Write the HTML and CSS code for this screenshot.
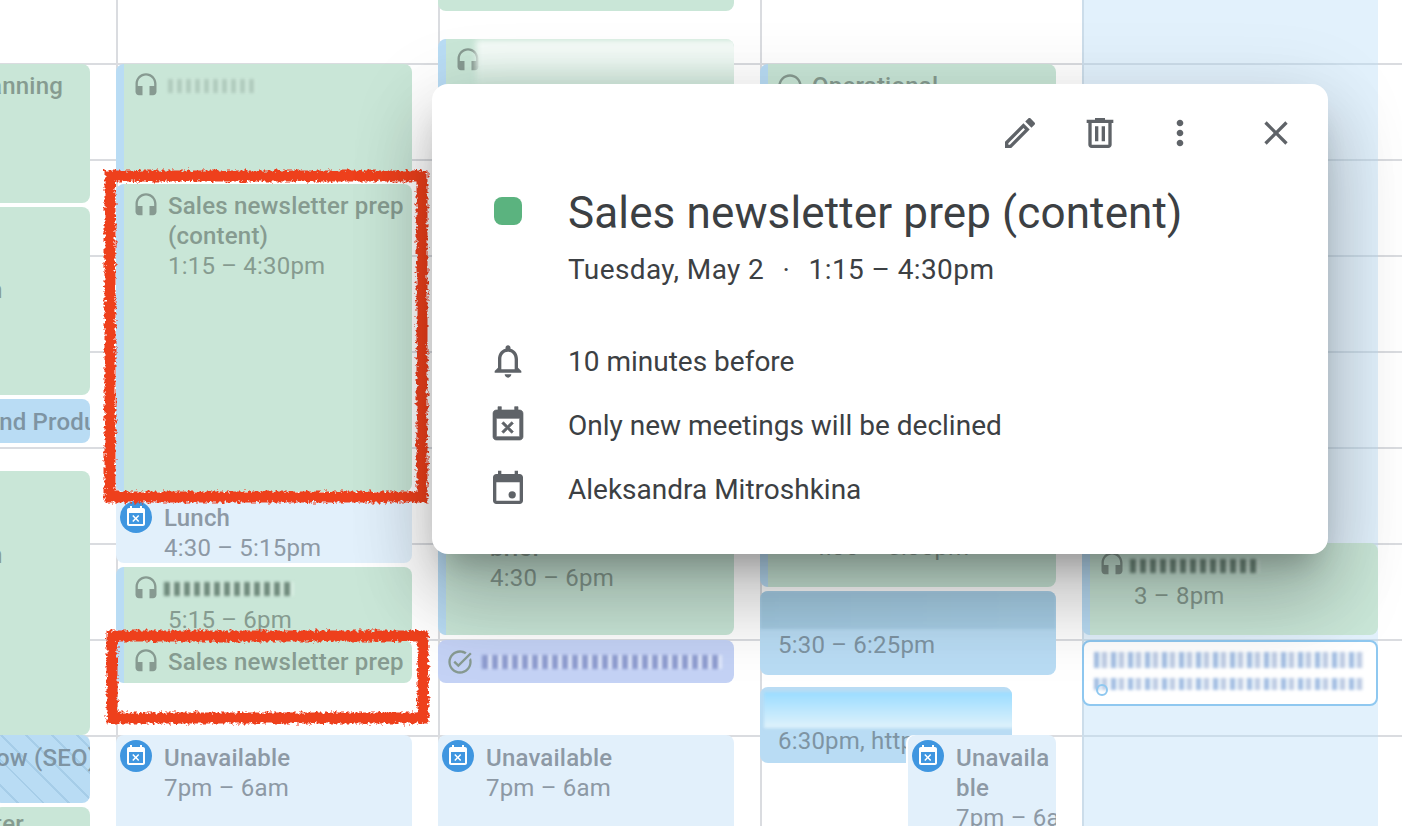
FILE: index.html
```html
<!DOCTYPE html>
<html lang="en">
<head>
    <meta charset="UTF-8">
    <title>Calendar event details</title>
    <link rel="stylesheet" href="styles.css">
</head>
<body>
    <svg class="icon-defs" aria-hidden="true">
        <defs>
            <symbol id="i-headset" viewBox="0 0 24 24"><path d="M12 1c-4.97 0-9 4.03-9 9v7c0 1.66 1.34 3 3 3h3v-8H5v-2c0-3.87 3.13-7 7-7s7 3.13 7 7v2h-4v8h3c1.66 0 3-1.34 3-3v-7c0-4.97-4.03-9-9-9z"/></symbol>
            <symbol id="i-busy" viewBox="0 0 24 24"><path d="M9.31 17l2.44-2.44L14.19 17l1.06-1.06-2.44-2.44 2.44-2.44L14.19 10l-2.44 2.44L9.31 10l-1.06 1.06 2.44 2.44-2.44 2.44L9.31 17zM19 3h-1V1h-2v2H8V1H6v2H5c-1.11 0-1.99.9-1.99 2L3 19c0 1.1.89 2 2 2h14c1.1 0 2-.9 2-2V5c0-1.1-.9-2-2-2zm0 16H5V8h14v11z"/></symbol>
            <symbol id="i-task" viewBox="0 0 24 24"><path d="M22 5.18L10.59 16.6l-4.24-4.25 1.41-1.41 2.83 2.83 10-10L22 5.18zM19.79 10.22c.13.57.21 1.17.21 1.78 0 4.42-3.58 8-8 8s-8-3.58-8-8 3.58-8 8-8c1.58 0 3.04.46 4.28 1.25l1.44-1.44C16.1 2.67 14.13 2 12 2 6.48 2 2 6.48 2 12s4.48 10 10 10 10-4.48 10-10c0-1.19-.22-2.33-.6-3.39l-1.61 1.61z"/></symbol>
            <symbol id="i-ring" viewBox="0 0 24 24"><path d="M12 2C6.48 2 2 6.48 2 12s4.48 10 10 10 10-4.48 10-10S17.52 2 12 2zm0 18c-4.42 0-8-3.58-8-8s3.58-8 8-8 8 3.58 8 8-3.58 8-8 8z"/></symbol>
        </defs>
    </svg>

    <div class="calendar">
        <div class="day day-first">
            <div class="event green cut cut-planning"><div class="title">Planning</div></div>
            <div class="event green cut cut-n1"><div class="title">n</div></div>
            <div class="event blue cut cut-product"><div class="title">and Product</div></div>
            <div class="event green cut cut-n2"><div class="title">n</div></div>
            <div class="event hatched cut cut-seo"><div class="title">ow (SEO)</div></div>
            <div class="event green cut cut-last"><div class="title">ter</div></div>
        </div>

        <div class="day">
            <div class="event green stripe ev-review">
                <svg class="ev-icon"><use href="#i-headset"/></svg>
                <div class="ev-body"><span class="smudge sm-short"></span></div>
            </div>
            <div class="event green stripe ev-prep">
                <svg class="ev-icon"><use href="#i-headset"/></svg>
                <div class="ev-body">
                    <div class="title">Sales newsletter prep (content)</div>
                    <div class="time">1:15 – 4:30pm</div>
                </div>
            </div>
            <div class="event pale ev-lunch">
                <span class="busy"><svg><use href="#i-busy"/></svg></span>
                <div class="ev-body">
                    <div class="title">Lunch</div>
                    <div class="time">4:30 – 5:15pm</div>
                </div>
            </div>
            <div class="event green stripe ev-after">
                <svg class="ev-icon"><use href="#i-headset"/></svg>
                <div class="ev-body">
                    <span class="smudge sm-dark"></span>
                    <div class="time">5:15 – 6pm</div>
                </div>
            </div>
            <div class="event green stripe ev-prep2">
                <svg class="ev-icon"><use href="#i-headset"/></svg>
                <div class="ev-body"><div class="title">Sales newsletter prep</div></div>
            </div>
            <div class="event pale ev-unavail">
                <span class="busy"><svg><use href="#i-busy"/></svg></span>
                <div class="ev-body">
                    <div class="title">Unavailable</div>
                    <div class="time">7pm – 6am</div>
                </div>
            </div>
        </div>

        <div class="day">
            <div class="event green ev-top"></div>
            <div class="event green stripe ev-morning">
                <svg class="ev-icon"><use href="#i-headset"/></svg>
                <div class="ev-body"><span class="smudge sm-wash"></span></div>
            </div>
            <div class="event green stripe ev-brief">
                <svg class="ev-icon"><use href="#i-headset"/></svg>
                <div class="ev-body">
                    <div class="title title-second">brief</div>
                    <div class="time">4:30 – 6pm</div>
                </div>
            </div>
            <div class="event task ev-task">
                <svg class="ev-icon"><use href="#i-task"/></svg>
                <div class="ev-body"><span class="smudge sm-task"></span></div>
            </div>
            <div class="event pale ev-unavail">
                <span class="busy"><svg><use href="#i-busy"/></svg></span>
                <div class="ev-body">
                    <div class="title">Unavailable</div>
                    <div class="time">7pm – 6am</div>
                </div>
            </div>
        </div>

        <div class="day">
            <div class="event green stripe ev-ops">
                <svg class="ev-icon"><use href="#i-ring"/></svg>
                <div class="ev-body"><div class="title">Operational</div></div>
            </div>
            <div class="event green stripe ev-ops2">
                <div class="ev-body">
                    <div class="time">4:30 – 5:30pm</div>
                </div>
            </div>
            <div class="event blue ev-call">
                <div class="ev-plain">
                    <span class="smudge sm-blue"></span>
                    <div class="time">5:30 – 6:25pm</div>
                </div>
            </div>
            <div class="event blue ev-link">
                <div class="ev-plain">
                    <span class="smudge sm-bright"></span>
                    <div class="time nowrap">6:30pm, http</div>
                </div>
            </div>
            <div class="event pale ev-narrow">
                <span class="busy"><svg><use href="#i-busy"/></svg></span>
                <div class="ev-body">
                    <div class="title">Unavailable</div>
                    <div class="time nowrap">7pm – 6am</div>
                </div>
            </div>
        </div>

        <div class="day">
            <div class="allday"></div>
            <div class="event green stripe ev-late">
                <svg class="ev-icon"><use href="#i-headset"/></svg>
                <div class="ev-body">
                    <span class="smudge sm-dark"></span>
                    <div class="time">3 – 8pm</div>
                </div>
            </div>
            <div class="event outlined ev-outlined">
                <span class="smudge sm-noise"></span>
                <span class="smudge sm-noise sm-noise-low"></span>
                <span class="ring"></span>
            </div>
        </div>

        <svg class="scribbles" width="1402" height="826" aria-hidden="true">
            <filter id="rough" x="-5%" y="-5%" width="110%" height="110%">
                <feTurbulence type="fractalNoise" baseFrequency="0.32" numOctaves="3" seed="4"/>
                <feDisplacementMap in="SourceGraphic" scale="7"/>
            </filter>
            <g filter="url(#rough)" fill="none" stroke="#ee3f1e" stroke-width="11">
                <rect x="110" y="176" width="312" height="321"/>
                <rect x="112" y="636" width="311" height="82"/>
            </g>
        </svg>

        <div class="popup">
            <div class="toolbar">
                <svg class="tool" viewBox="0 0 24 24"><path d="M14.06 9.02l.92.92L5.92 19H5v-.92l9.06-9.06M17.66 3c-.25 0-.51.1-.7.29l-1.83 1.83 3.75 3.75 1.83-1.83c.39-.39.39-1.02 0-1.41l-2.34-2.34c-.2-.2-.45-.29-.71-.29zm-3.6 3.19L3 17.25V21h3.75L17.81 9.94l-3.75-3.75z"/></svg>
                <svg class="tool" viewBox="0 0 24 24"><path d="M15 4V3H9v1H4v2h1v13c0 1.1.9 2 2 2h10c1.1 0 2-.9 2-2V6h1V4h-5zm2 15H7V6h10v13zM9 8h2v9H9zm4 0h2v9h-2z"/></svg>
                <svg class="tool" viewBox="0 0 24 24"><path d="M12 8c1.1 0 2-.9 2-2s-.9-2-2-2-2 .9-2 2 .9 2 2 2zm0 2c-1.1 0-2 .9-2 2s.9 2 2 2 2-.9 2-2-.9-2-2-2zm0 6c-1.1 0-2 .9-2 2s.9 2 2 2 2-.9 2-2-.9-2-2-2z"/></svg>
                <svg class="tool tool-close" viewBox="0 0 24 24"><path d="M19 6.41L17.59 5 12 10.59 6.41 5 5 6.41 10.59 12 5 17.59 6.41 19 12 13.41 17.59 19 19 17.59 13.41 12z"/></svg>
            </div>

            <div class="popup-head">
                <span class="swatch"></span>
                <div>
                    <h2 class="popup-title">Sales newsletter prep (content)</h2>
                    <p class="popup-date">Tuesday, May 2 <span class="dot">·</span> 1:15 – 4:30pm</p>
                </div>
            </div>

            <div class="popup-rows">
                <div class="row">
                    <svg class="row-icon" viewBox="0 0 24 24"><path d="M12 22c1.1 0 2-.9 2-2h-4c0 1.1.9 2 2 2zm6-6v-5c0-3.07-1.63-5.64-4.5-6.32V4c0-.83-.67-1.5-1.5-1.5s-1.5.67-1.5 1.5v.68C7.64 5.36 6 7.92 6 11v5l-2 2v1h16v-1l-2-2zm-2 1H8v-6c0-2.48 1.51-4.5 4-4.5s4 2.02 4 4.5v6z"/></svg>
                    <span>10 minutes before</span>
                </div>
                <div class="row">
                    <svg class="row-icon row-icon-bold"><use href="#i-busy"/></svg>
                    <span>Only new meetings will be declined</span>
                </div>
                <div class="row">
                    <svg class="row-icon" viewBox="0 0 24 24"><path d="M16 1v2H8V1H6v2H5c-1.11 0-1.99.9-1.99 2L3 19c0 1.1.89 2 2 2h14c1.1 0 2-.9 2-2V5c0-1.1-.9-2-2-2h-1V1h-2zm3 18H5V8h14v11z"/><circle cx="14.5" cy="15.5" r="2.2"/></svg>
                    <span>Aleksandra Mitroshkina</span>
                </div>
            </div>
        </div>
    </div>
</body>
</html>
```

FILE: styles.css
```css
/* Page and week grid */
body {
    margin: 0;
    background-color: #fff;
    font-family: Roboto, "Liberation Sans", sans-serif;
}
.icon-defs {
    display: none;
}
.calendar {
    position: relative;
    display: flex;
    width: 1402px;
    height: 826px;
    overflow: hidden;
    background-image: repeating-linear-gradient(180deg, transparent 0 63px, #dadce0 63px 65px, transparent 65px 96px);
}
.day {
    position: relative;
    flex: 0 0 322px;
    border-left: 2px solid #dadce0;
    box-sizing: border-box;
}
.day-first {
    flex-basis: 116px;
    border-left: none;
}
.allday {
    position: absolute;
    top: 0;
    bottom: 0;
    left: -2px;
    width: 296px;
    background-color: rgba(186, 222, 247, 0.42);
}

/* Events, placed by their start time */
.event {
    position: absolute;
    left: -2px;
    display: flex;
    width: 296px;
    box-sizing: border-box;
    overflow: hidden;
    border-radius: 8px;
    font-size: 24px;
    line-height: 30px;
    letter-spacing: 0.2px;
}
.green {
    background-color: #c9e6d7;
    color: #869b90;
}
.blue {
    background-color: #b9dcf4;
    color: #7e94a3;
}
.pale {
    background-color: #e2f0fb;
    color: #8d99a5;
}
.task {
    background-color: #c4d2f5;
    color: #7f8794;
}
.hatched {
    background-color: #b9dcf4;
    background-image: repeating-linear-gradient(45deg, transparent 0 16px, #a6cde8 16px 18px);
    color: #7e94a3;
}
.outlined {
    display: block;
    border: 2px solid #8fc8f0;
    background-color: #fff;
}
.stripe {
    border-left: 8px solid #b9dcf4;
}
.title {
    font-weight: 500;
}
.title-second {
    margin-top: 30px;
}
.time {
    font-weight: 400;
}
.nowrap {
    white-space: nowrap;
}
.ev-icon {
    flex: none;
    width: 28px;
    height: 28px;
    margin: 8px 8px 0;
    fill: #879a91;
}
.ev-body {
    flex: 1;
    min-width: 0;
    padding: 7px 6px 0 0;
}
.ev-plain {
    padding: 9px 18px 0;
    width: 100%;
    box-sizing: border-box;
}
.busy {
    display: flex;
    flex: none;
    align-items: center;
    justify-content: center;
    width: 32px;
    height: 32px;
    margin: 5px 12px 0 4px;
    border-radius: 50%;
    background-color: #3f96e0;
}
.busy svg {
    width: 24px;
    height: 24px;
    fill: #fff;
}

/* First column, only the right ends of the events are in view */
.cut {
    left: auto;
    right: 26px;
    white-space: nowrap;
}
.cut-planning {
    top: 64px;
    width: 100px;
    height: 139px;
    padding: 7px 27px 0 0;
    justify-content: flex-end;
}
.cut-n1 {
    top: 207px;
    width: 110px;
    height: 188px;
    padding: 68px 0 0 9px;
}
.cut-product {
    top: 399px;
    width: 104px;
    height: 44px;
    padding: 8px 0 0 0;
}
.cut-n2 {
    top: 471px;
    width: 110px;
    height: 264px;
    padding: 69px 0 0 9px;
}
.cut-seo {
    top: 735px;
    width: 96px;
    height: 68px;
    padding: 8px 0 0 2px;
    border: none;
}
.cut-last {
    top: 807px;
    width: 96px;
    height: 40px;
    padding: 2px 0 0 0;
}

/* Second column */
.ev-review {
    top: 64px;
    height: 116px;
}
.ev-prep {
    top: 184px;
    height: 308px;
}
.ev-lunch {
    top: 496px;
    height: 67px;
}
.ev-unavail .ev-body,
.ev-narrow .ev-body {
    padding-top: 8px;
}
.ev-after {
    top: 567px;
    height: 69px;
}
.ev-after .smudge {
    margin-bottom: 9px;
}
.ev-prep2 {
    top: 640px;
    height: 43px;
}
.ev-unavail {
    top: 735px;
    height: 120px;
}

/* Third column */
.ev-top {
    top: -40px;
    height: 51px;
}
.ev-morning {
    top: 39px;
    height: 100px;
}
.ev-brief {
    top: 496px;
    height: 139px;
}
.ev-task {
    top: 640px;
    height: 43px;
}

/* Fourth column */
.ev-ops {
    top: 64px;
    height: 100px;
}
.ev-ops2 {
    top: 496px;
    height: 91px;
    padding-left: 44px;
}
.ev-ops2 .ev-body {
    padding-top: 36px;
}
.ev-call {
    top: 591px;
    height: 84px;
}
.ev-link {
    top: 687px;
    width: 252px;
    height: 76px;
}
.ev-narrow {
    top: 735px;
    left: 146px;
    width: 148px;
    height: 120px;
    box-shadow: -2px 0 0 #fff;
}
.ev-narrow .title {
    word-break: break-all;
}
.ev-narrow .ev-body {
    padding-right: 0;
}

/* Fifth column */
.ev-late {
    top: 543px;
    height: 92px;
}
.ev-late .ev-body {
    padding-top: 8px;
}
.ev-outlined {
    top: 640px;
    height: 66px;
    padding: 8px 10px;
}
.ring {
    position: absolute;
    top: 42px;
    left: 12px;
    width: 12px;
    height: 12px;
    box-sizing: border-box;
    border: 2px solid #8fc8f0;
    border-radius: 50%;
}

/* Smudged titles, these are not readable in the reference */
.smudge {
    display: block;
    height: 14px;
    margin: 8px 0;
    filter: blur(1.5px);
    background-image: repeating-linear-gradient(90deg, #8ca396 0 5px, #d8eee2 5px 9px);
}
.sm-short {
    width: 88px;
    opacity: 0.4;
}
.sm-dark {
    width: 130px;
    margin-left: -4px;
    background-image: repeating-linear-gradient(90deg, #6f8a7c 0 6px, #d8eee2 6px 10px);
}
.sm-wash {
    width: 270px;
    height: 46px;
    margin: -6px 0 0 -14px;
    filter: blur(3px);
    background-image: linear-gradient(180deg, #f7fcf9 0, #eef8f3 40%, #cfe7da 100%);
}
.sm-task {
    width: 240px;
    background-image: repeating-linear-gradient(90deg, #8d9bcf 0 6px, #e2eafc 6px 10px);
}
.sm-blue {
    width: 296px;
    height: 38px;
    margin: -9px 0 1px -18px;
    background-image: linear-gradient(90deg, #a4cce3, #a8d0e8);
}
.sm-bright {
    width: 250px;
    height: 36px;
    margin: -4px 0 -2px -14px;
    background-image: linear-gradient(180deg, #9adcff, #dff2fb);
}
.sm-noise {
    width: 270px;
    height: 16px;
    margin: 2px 0 0;
    opacity: 0.7;
    background-image: repeating-linear-gradient(90deg, #7ea3d6 0 5px, #e6f2fb 5px 8px, #a3b6d8 8px 13px, #f3f8fc 13px 17px);
}
.sm-noise-low {
    margin-top: 10px;
    height: 12px;
}

/* Red marker around the two events */
.scribbles {
    position: absolute;
    top: 0;
    left: 0;
    pointer-events: none;
}

/* Event details card */
.popup {
    position: absolute;
    top: 84px;
    left: 432px;
    width: 896px;
    height: 470px;
    box-sizing: border-box;
    border-radius: 16px;
    background-color: #fff;
    color: #3c4043;
    box-shadow: 0 48px 76px 6px rgba(0, 0, 0, 0.18), 0 18px 80px 10px rgba(0, 0, 0, 0.1), 0 22px 30px -14px rgba(0, 0, 0, 0.24);
}
.toolbar {
    display: flex;
    justify-content: flex-end;
    gap: 40px;
    padding: 29px 32px 0 0;
}
.tool {
    width: 40px;
    height: 40px;
    fill: #5f6368;
}
.tool-close {
    margin-left: 16px;
}
.popup-head {
    display: flex;
    margin-top: 32px;
}
.swatch {
    flex: none;
    width: 28px;
    height: 28px;
    margin: 12px 46px 0 62px;
    border-radius: 8px;
    background-color: #5bb37f;
}
.popup-title {
    margin: 0;
    font-size: 44px;
    font-weight: 400;
    line-height: 56px;
    letter-spacing: 0.13px;
}
.popup-date {
    margin: 9px 0 0;
    font-size: 28px;
    line-height: 40px;
    letter-spacing: 0.4px;
}
.dot {
    margin: 0 11px;
}
.popup-rows {
    margin-top: 39px;
}
.row {
    display: flex;
    align-items: center;
    height: 64px;
    font-size: 28px;
}
.row-icon {
    flex: none;
    width: 40px;
    height: 40px;
    margin: 0 40px 0 56px;
    fill: #5f6368;
}
.row-icon-bold {
    stroke: #5f6368;
    stroke-width: 0.4;
}
```
